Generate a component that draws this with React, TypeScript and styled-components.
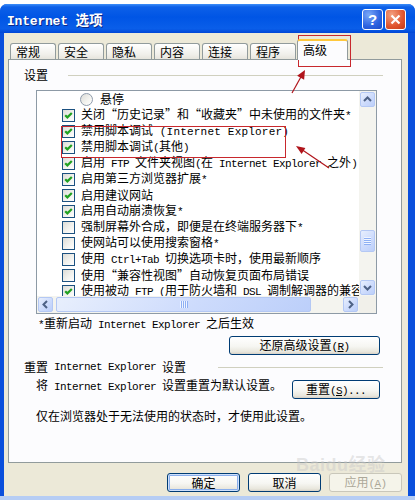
import React from "react";
import styled, { createGlobalStyle, css } from "styled-components";

const GlobalStyle = createGlobalStyle`
  html, body {
    margin: 0;
    padding: 0;
    background: #ffffff;
  }
  body {
    font-family: "Noto Sans CJK SC", "Liberation Sans", sans-serif;
    font-size: 12px;
    color: #000;
  }
`;

const Screen = styled.div`
  position: relative;
  width: 415px;
  height: 500px;
  overflow: hidden;
`;

const Frame = styled.div`
  margin-top: 4px;
  height: 496px;
  box-sizing: border-box;
  display: flex;
  flex-direction: column;
  background: #0a4fdc;
  border-radius: 7px 7px 0 0;
  border-bottom: 4px solid #b6cdf4;
`;

const TitleBar = styled.div`
  height: 29px;
  flex-shrink: 0;
  display: flex;
  align-items: center;
  padding: 1px 9px 0 7px;
  box-sizing: border-box;
  border-radius: 7px 7px 0 0;
  background: linear-gradient(
    #3d8ef8 0px,
    #0d60e8 3px,
    #0055e5 45%,
    #0a5ee9 85%,
    #0046d6 100%
  );
`;

const Title = styled.div`
  flex: 1;
  color: #fff;
  font-weight: bold;
  font-size: 13.5px;
  text-shadow: 1px 1px 0 #0a2a8a;
  white-space: pre;
`;

const TitleLat = styled.span`
  font-family: "Liberation Mono", monospace;
  font-size: 13px;
  letter-spacing: -0.2px;
`;

const TitleButtons = styled.div`
  display: flex;
  gap: 2px;
`;

const CapButton = styled.div<{ $kind: "help" | "close" }>`
  width: 21px;
  height: 21px;
  box-sizing: border-box;
  border: 1px solid #fff;
  border-radius: 3px;
  display: flex;
  align-items: center;
  justify-content: center;
  color: #fff;
  font-family: "Liberation Sans", sans-serif;
  font-weight: bold;
  font-size: 15px;
  ${(p) =>
    p.$kind === "help"
      ? css`
          background: radial-gradient(circle at 30% 25%, #7aa8f8, #2c62e0 60%, #1c49c6);
        `
      : css`
          background: radial-gradient(circle at 30% 25%, #f3a080, #e0542e 60%, #c33a17);
        `}
`;

const Body = styled.div`
  flex: 1;
  margin: 0 7px 0 4px;
  padding: 6px 6px 0 4px;
  background: #ece9d8;
  display: flex;
  flex-direction: column;
`;

const TabRow = styled.div`
  height: 20px;
  display: flex;
  align-items: flex-end;
  padding-left: 2px;
  position: relative;
  z-index: 1;
`;

const Tab = styled.div<{ $active?: boolean }>`
  width: 46px;
  height: 16px;
  margin-right: 2px;
  box-sizing: border-box;
  border: 1px solid #919b9c;
  border-bottom: none;
  border-radius: 3px 3px 0 0;
  background: linear-gradient(#ffffff, #f0efea 70%, #e6e4dc);
  padding-left: 5px;
  line-height: 15px;
  ${(p) =>
    p.$active &&
    css`
      width: 51px;
      height: 21px;
      margin-left: -1px;
      margin-bottom: -1px;
      background: #fcfcfe;
      border-top: 2px solid #ffc83c;
      line-height: 17px;
    `}
`;

const Panel = styled.div`
  height: 404px;
  box-sizing: border-box;
  border: 1px solid #919b9c;
  background: #fcfcfe;
  display: flex;
  flex-direction: column;
`;

const GroupHeader = styled.div<{ $top: number }>`
  height: 16px;
  display: flex;
  align-items: center;
  margin: ${(p) => p.$top}px 18px 0 15px;
  line-height: 16px;
`;

const Rule = styled.div<{ $gap: number }>`
  flex: 1;
  height: 1px;
  margin-left: ${(p) => p.$gap}px;
  background: #d0d0bf;
`;

const ListBox = styled.div`
  margin: 7px 0 0 27px;
  width: 341px;
  height: 224px;
  box-sizing: border-box;
  border: 1px solid #8d9aa6;
  background: #fff;
  display: grid;
  grid-template-columns: 1fr 17px;
  grid-template-rows: 1fr 17px;
`;

const ListContent = styled.div`
  overflow: hidden;
  white-space: nowrap;
`;

const Row = styled.div<{ $indent?: boolean; $wide?: boolean }>`
  height: 16px;
  display: flex;
  align-items: center;
  gap: 6px;
  padding-left: ${(p) => (p.$indent ? 43 : 25)}px;
  line-height: 16px;
  ${(p) => p.$indent && "gap: 7px;"}
  ${(p) => p.$wide && "--lat-ls: 0.2px;"}
`;

const Lat = styled.span`
  font-family: "Liberation Mono", monospace;
  font-size: 11px;
  letter-spacing: var(--lat-ls, -0.6px);
  white-space: pre;
`;

const Box = styled.span`
  flex-shrink: 0;
  width: 13px;
  height: 13px;
  box-sizing: border-box;
  border: 1px solid #1c5180;
  background: linear-gradient(135deg, #dcdcd7 0%, #f2f2ee 55%, #ffffff 100%);
  display: flex;
  align-items: center;
  justify-content: center;
`;

const Radio = styled.span`
  flex-shrink: 0;
  width: 13px;
  height: 13px;
  box-sizing: border-box;
  border-radius: 50%;
  border: 1px solid #8e9bab;
  background: linear-gradient(135deg, #dcdcd7 0%, #f4f4f0 60%, #ffffff 100%);
`;

const VScroll = styled.div`
  display: flex;
  flex-direction: column;
  background: #f4f4ef;
`;

const HScroll = styled.div`
  display: flex;
  background: #f4f4ef;
`;

const Corner = styled.div`
  background: #f1f0ea;
`;

const Track = styled.div<{ $vertical?: boolean }>`
  flex: 1;
  display: flex;
  flex-direction: ${(p) => (p.$vertical ? "column" : "row")};
`;

const scrollFace = css`
  box-sizing: border-box;
  border: 1px solid #b4c8f4;
  border-radius: 2px;
  background: linear-gradient(135deg, #e8effd 0%, #cddbfc 55%, #bccffa 100%);
`;

const ScrollBtn = styled.div`
  ${scrollFace};
  width: 15px;
  height: 15px;
  margin: 1px;
  display: flex;
  align-items: center;
  justify-content: center;
`;

const Thumb = styled.div<{ $vertical?: boolean }>`
  ${scrollFace};
  display: flex;
  align-items: center;
  justify-content: center;
  ${(p) =>
    p.$vertical
      ? css`
          width: 15px;
          margin-left: 1px;
        `
      : css`
          height: 15px;
          margin-top: 1px;
        `}
  &::after {
    content: "";
    width: ${(p) => (p.$vertical ? 7 : 8)}px;
    height: ${(p) => (p.$vertical ? 8 : 7)}px;
    background: repeating-linear-gradient(
      ${(p) => (p.$vertical ? "to bottom" : "to right")},
      #f0f5ff 0 1px,
      #8eb0f4 1px 2px
    );
  }
`;

const Note = styled.div<{ $left: number; $top: number }>`
  margin: ${(p) => p.$top}px 0 0 ${(p) => p.$left}px;
  line-height: 16px;
  white-space: nowrap;
`;

const ButtonLine = styled.div<{ $top: number }>`
  display: flex;
  justify-content: flex-end;
  margin: ${(p) => p.$top}px 21px 0 0;
`;

const SplitLine = styled.div`
  display: flex;
  justify-content: space-between;
  align-items: flex-start;
  margin: 2px 21px 0 27px;
  line-height: 16px;
`;

const Button = styled.button<{ $w: number; $focus?: boolean }>`
  width: ${(p) => p.$w}px;
  height: 19px;
  padding: 0;
  box-sizing: border-box;
  border: 1px solid #003c74;
  border-radius: 3px;
  background: linear-gradient(#ffffff 0%, #f6f6f2 55%, #e8e6dc 88%, #d6d0c5 100%);
  font-family: inherit;
  font-size: 12px;
  line-height: 16px;
  color: #000;
  white-space: pre;
  ${(p) =>
    p.$focus &&
    css`
      box-shadow: inset 0 0 0 1px #cee0fb, inset 0 0 0 2px #89aeec;
    `}
  &:disabled {
    border-color: #c9c7ba;
    color: #aca899;
    background: #f5f4ea;
  }
`;

const Footer = styled.div`
  display: flex;
  justify-content: flex-end;
  gap: 8px;
  margin-top: 10px;
`;

const Overlay = styled.svg`
  position: absolute;
  left: 0;
  top: 0;
  pointer-events: none;
`;

const Watermark = styled.div`
  position: absolute;
  left: 296px;
  top: 450px;
  font-family: "Liberation Sans", "Noto Sans CJK SC", sans-serif;
  font-weight: bold;
  font-size: 18px;
  color: rgba(200, 200, 200, 0.45);
  letter-spacing: 0.5px;
`;

// split a label into CJK runs and latin runs (latin is half width in the dialog font)
const Txt: React.FC<{ s: string }> = ({ s }) => (
  <>
    {s.split(/([\x20-\x7e]+)/).map((part, i) =>
      /[\x20-\x7e]/.test(part) ? <Lat key={i}>{part}</Lat> : part
    )}
  </>
);

const Arrow: React.FC<{ dir: "up" | "down" | "left" | "right" }> = ({ dir }) => {
  const pts = {
    up: "1,6 4.5,2.5 8,6",
    down: "1,3 4.5,6.5 8,3",
    left: "6,1 2.5,4.5 6,8",
    right: "3,1 6.5,4.5 3,8",
  }[dir];
  return (
    <svg width="9" height="9" viewBox="0 0 9 9">
      <polyline points={pts} fill="none" stroke="#4d6185" strokeWidth="2" />
    </svg>
  );
};

const CheckMark = () => (
  <svg width="9" height="9" viewBox="0 0 9 9">
    <polyline points="1.2,4.2 3.4,6.4 7.8,2" fill="none" stroke="#21a121" strokeWidth="2.2" />
  </svg>
);

type Item = { kind: "radio" | "check"; on?: boolean; wide?: boolean; label: string };

const items: Item[] = [
  { kind: "radio", label: "悬停" },
  { kind: "check", on: true, label: "关闭“历史记录”和“收藏夹”中未使用的文件夹*" },
  { kind: "check", on: true, wide: true, label: "禁用脚本调试 (Internet Explorer)" },
  { kind: "check", on: true, label: "禁用脚本调试(其他)" },
  { kind: "check", on: true, label: "启用 FTP 文件夹视图(在 Internet Explorer 之外)" },
  { kind: "check", on: true, label: "启用第三方浏览器扩展*" },
  { kind: "check", on: true, label: "启用建议网站" },
  { kind: "check", on: true, label: "启用自动崩溃恢复*" },
  { kind: "check", label: "强制屏幕外合成，即便是在终端服务器下*" },
  { kind: "check", label: "使网站可以使用搜索窗格*" },
  { kind: "check", label: "使用 Ctrl+Tab 切换选项卡时，使用最新顺序" },
  { kind: "check", label: "使用“兼容性视图”自动恢复页面布局错误" },
  { kind: "check", on: true, label: "使用被动 FTP (用于防火墙和 DSL 调制解调器的兼容性)" },
];

const tabs = ["常规", "安全", "隐私", "内容", "连接", "程序", "高级"];

const vThumb = { offset: 122, size: 22 };
const hThumb = { offset: 2, size: 255 };

const App: React.FC = () => {
  return (
    <Screen>
      <GlobalStyle />
      <Frame>
        <TitleBar>
          <Title>
            <TitleLat>Internet </TitleLat>选项
          </Title>
          <TitleButtons>
            <CapButton $kind="help">?</CapButton>
            <CapButton $kind="close">
              <svg width="11" height="11" viewBox="0 0 11 11">
                <path d="M1.5 1.5 L9.5 9.5 M9.5 1.5 L1.5 9.5" stroke="#fff" strokeWidth="2.2" />
              </svg>
            </CapButton>
          </TitleButtons>
        </TitleBar>

        <Body>
          <TabRow>
            {tabs.map((t, i) => (
              <Tab key={t} $active={i === tabs.length - 1}>
                {t}
              </Tab>
            ))}
          </TabRow>

          <Panel>
            <GroupHeader $top={7}>
              设置
              <Rule $gap={20} />
            </GroupHeader>

            <ListBox>
              <ListContent>
                {items.map((it) => (
                  <Row key={it.label} $indent={it.kind === "radio"} $wide={it.wide}>
                    {it.kind === "radio" ? <Radio /> : <Box>{it.on && <CheckMark />}</Box>}
                    <span>
                      <Txt s={it.label} />
                    </span>
                  </Row>
                ))}
              </ListContent>
              <VScroll>
                <ScrollBtn>
                  <Arrow dir="up" />
                </ScrollBtn>
                <Track $vertical>
                  <Thumb $vertical style={{ marginTop: vThumb.offset, height: vThumb.size }} />
                </Track>
                <ScrollBtn>
                  <Arrow dir="down" />
                </ScrollBtn>
              </VScroll>
              <HScroll>
                <ScrollBtn>
                  <Arrow dir="left" />
                </ScrollBtn>
                <Track>
                  <Thumb style={{ marginLeft: hThumb.offset, width: hThumb.size }} />
                </Track>
                <ScrollBtn>
                  <Arrow dir="right" />
                </ScrollBtn>
              </HScroll>
              <Corner />
            </ListBox>

            <Note $left={29} $top={1}>
              <Txt s="*重新启动 Internet Explorer 之后生效" />
            </Note>

            <ButtonLine $top={3}>
              <Button $w={151}>
                还原高级设置<Lat>(<u>R</u>)</Lat>
              </Button>
            </ButtonLine>

            <GroupHeader $top={4}>
              <Txt s="重置 Internet Explorer 设置" />
              <Rule $gap={32} />
            </GroupHeader>

            <SplitLine>
              <span>
                <Txt s="将 Internet Explorer 设置重置为默认设置。" />
              </span>
              <Button $w={88} style={{ marginTop: 3 }}>
                重置<Lat>(<u>S</u>)...</Lat>
              </Button>
            </SplitLine>

            <Note $left={27} $top={9}>
              仅在浏览器处于无法使用的状态时，才使用此设置。
            </Note>
          </Panel>

          <Footer>
            <Button $w={73} $focus>
              确定
            </Button>
            <Button $w={73}>取消</Button>
            <Button $w={73} disabled>
              应用<Lat>(<u>A</u>)</Lat>
            </Button>
          </Footer>
        </Body>
      </Frame>

      <Watermark>Baidu经验</Watermark>

      <Overlay width="415" height="500" viewBox="0 0 415 500">
        <rect x="298.5" y="35.5" width="52" height="31" fill="none" stroke="#c8282d" strokeWidth="1" />
        <rect x="61.5" y="126.5" width="224" height="31" fill="none" stroke="#c8282d" strokeWidth="1" />
        <line x1="292" y1="93" x2="302" y2="75" stroke="#b0141b" strokeWidth="1.2" />
        <polygon points="305,70 304.1,79.8 297.1,75.8" fill="#b0141b" />
        <line x1="329" y1="168" x2="301" y2="149" stroke="#b0141b" strokeWidth="1.2" />
        <polygon points="296,146 305.4,148.1 301.6,153.9" fill="#b0141b" />
      </Overlay>
    </Screen>
  );
};

export default App;
